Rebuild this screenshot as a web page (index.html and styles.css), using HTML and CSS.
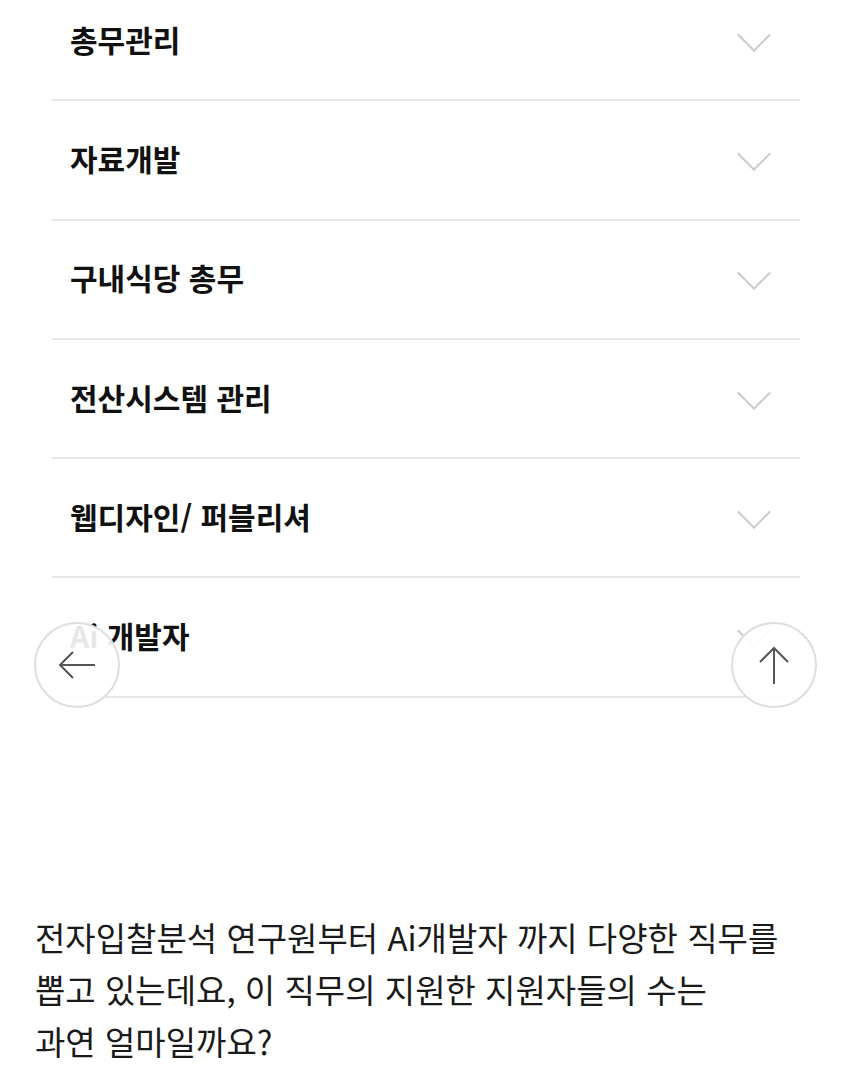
FILE: index.html
```html
<!DOCTYPE html>
<html lang="ko">
<head>
    <meta charset="UTF-8">
    <title>직무 안내</title>
    <link rel="stylesheet" href="styles.css">
</head>
<body>
    <ul class="job-list">
        <li class="job-item"><span>총무관리</span><i class="chevron"></i></li>
        <li class="job-item"><span>자료개발</span><i class="chevron"></i></li>
        <li class="job-item"><span>구내식당 총무</span><i class="chevron"></i></li>
        <li class="job-item"><span>전산시스템 관리</span><i class="chevron"></i></li>
        <li class="job-item"><span>웹디자인/ 퍼블리셔</span><i class="chevron"></i></li>
        <li class="job-item"><span>Ai 개발자</span><i class="chevron"></i></li>
    </ul>

    <p class="intro">
        전자입찰분석 연구원부터 Ai개발자 까지 다양한 직무를<br>
        뽑고 있는데요, 이 직무의 지원한 지원자들의 수는<br>
        과연 얼마일까요?
    </p>

    <button class="float-btn back-btn" aria-label="뒤로">
        <svg width="40" height="32" viewBox="0 0 40 32"><path d="M38 16H3M16 3L3 16l13 13" fill="none" stroke="#555" stroke-width="2"/></svg>
    </button>
    <button class="float-btn top-btn" aria-label="맨 위로">
        <svg width="34" height="40" viewBox="0 0 34 40"><path d="M17 39V3M3 17L17 3l14 14" fill="none" stroke="#555" stroke-width="2"/></svg>
    </button>
</body>
</html>
```

FILE: styles.css
```css
* {
    box-sizing: border-box;
}

body {
    margin: 0;
    background-color: #fff;
    font-family: "Noto Sans CJK KR", "Noto Sans", sans-serif;
    color: #1a1a1a;
    position: relative;
    height: 1092px;
    overflow: hidden;
}

.job-list {
    list-style: none;
    margin: -18px 50px 0 52px;
    padding: 0;
}

.job-item {
    height: 119.3px;
    display: flex;
    align-items: center;
    justify-content: space-between;
    padding: 0 28px 4px 18px;
    border-bottom: 2px solid #e8e8e8;
    font-size: 30px;
    font-weight: bold;
    color: #111;
}

.chevron {
    width: 24px;
    height: 24px;
    border-right: 2px solid #cccccc;
    border-bottom: 2px solid #cccccc;
    transform: rotate(45deg);
    margin: -8px 6px 0 0;
}

.intro {
    margin: 213px 0 0 35px;
    font-size: 33px;
    line-height: 52px;
}

.float-btn {
    position: absolute;
    top: 622px;
    width: 86px;
    height: 86px;
    border-radius: 50%;
    border: 2px solid #dedede;
    background-color: rgba(255, 255, 255, 0.9);
    display: flex;
    align-items: center;
    justify-content: center;
    padding: 0;
}

.back-btn {
    left: 34px;
}

.top-btn {
    left: 731px;
}
```
